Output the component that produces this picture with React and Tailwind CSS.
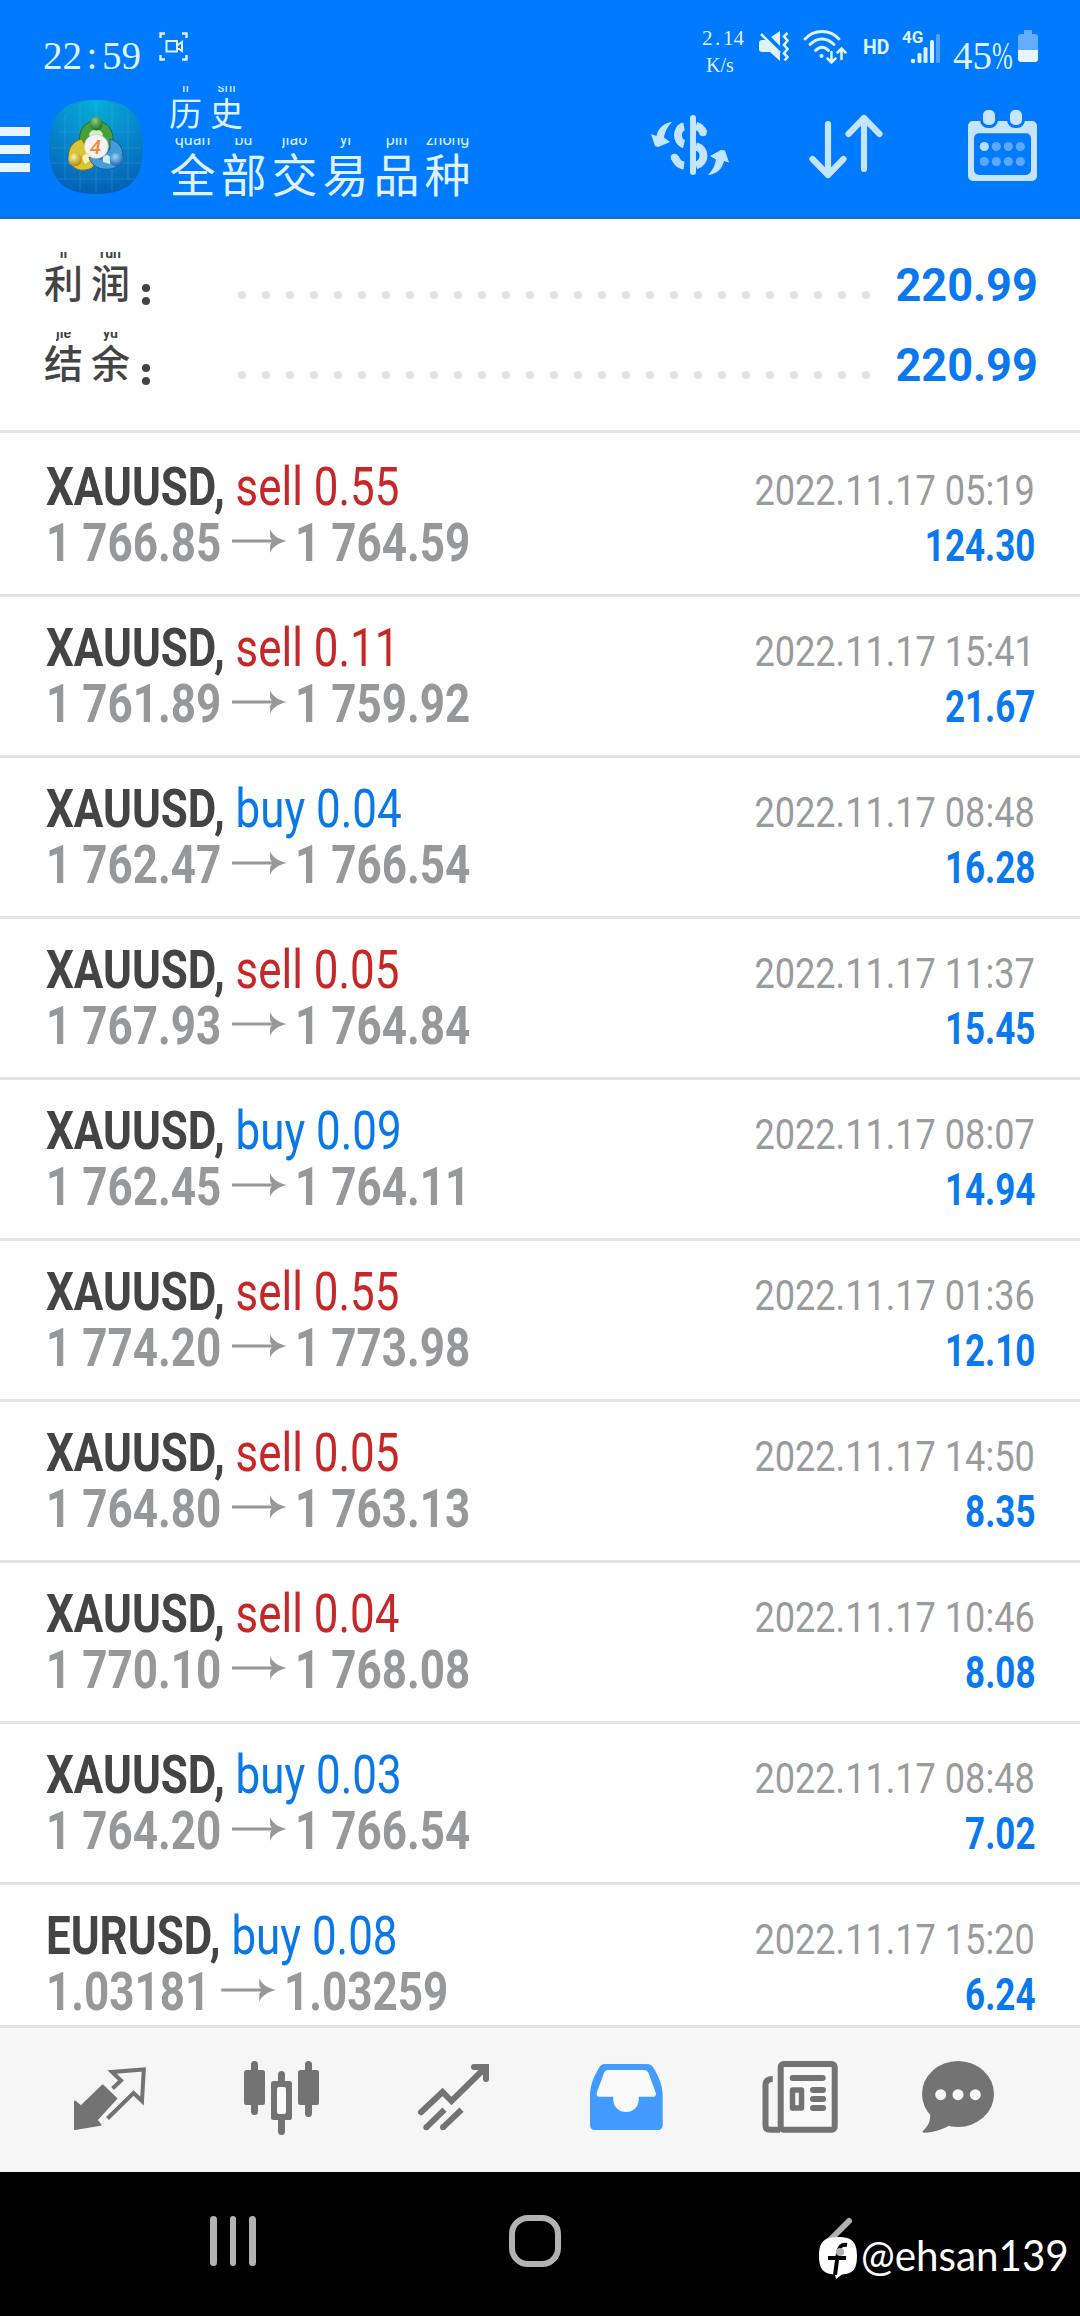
const deals = [
  { symbol: "XAUUSD", side: "sell", lots: "0.55", open: "1 766.85", close: "1 764.59", time: "2022.11.17 05:19", profit: "124.30" },
  { symbol: "XAUUSD", side: "sell", lots: "0.11", open: "1 761.89", close: "1 759.92", time: "2022.11.17 15:41", profit: "21.67" },
  { symbol: "XAUUSD", side: "buy", lots: "0.04", open: "1 762.47", close: "1 766.54", time: "2022.11.17 08:48", profit: "16.28" },
  { symbol: "XAUUSD", side: "sell", lots: "0.05", open: "1 767.93", close: "1 764.84", time: "2022.11.17 11:37", profit: "15.45" },
  { symbol: "XAUUSD", side: "buy", lots: "0.09", open: "1 762.45", close: "1 764.11", time: "2022.11.17 08:07", profit: "14.94" },
  { symbol: "XAUUSD", side: "sell", lots: "0.55", open: "1 774.20", close: "1 773.98", time: "2022.11.17 01:36", profit: "12.10" },
  { symbol: "XAUUSD", side: "sell", lots: "0.05", open: "1 764.80", close: "1 763.13", time: "2022.11.17 14:50", profit: "8.35" },
  { symbol: "XAUUSD", side: "sell", lots: "0.04", open: "1 770.10", close: "1 768.08", time: "2022.11.17 10:46", profit: "8.08" },
  { symbol: "XAUUSD", side: "buy", lots: "0.03", open: "1 764.20", close: "1 766.54", time: "2022.11.17 08:48", profit: "7.02" },
  { symbol: "EURUSD", side: "buy", lots: "0.08", open: "1.03181", close: "1.03259", time: "2022.11.17 15:20", profit: "6.24" },
];

// a row of hanzi, each with its pinyin above
function Hanzi({ chars, cell, text, pinyin }) {
  return (
    <div className="flex">
      {chars.map(([py, ch]) => (
        <div key={ch} className={`flex flex-col items-center ${cell}`}>
          <div className="flex h-3 items-end justify-center overflow-hidden">
            <span className={`leading-[21px] whitespace-nowrap ${pinyin}`}>{py}</span>
          </div>
          <span className={`font-['Noto_Sans_CJK_SC',sans-serif] ${text}`}>{ch}</span>
        </div>
      ))}
    </div>
  );
}

function StatusBar() {
  return (
    <div className="flex h-20 items-start justify-between pl-[43px] pr-[42px] text-[#dff2ff]">
      <div className="flex items-start">
        <div className="mt-[36px] flex font-['Liberation_Serif',serif] text-[39px] leading-[40px]">
          <span>22</span>
          <span className="w-5 text-center">:</span>
          <span>59</span>
        </div>
        <svg className="ml-[18px] mt-8 h-[30px] w-[30px]" viewBox="0 0 30 30" fill="none" stroke="currentColor" strokeWidth="2.4">
          <path d="M1.5 6V1.5H6M23 1.5h4.500V6M1.500 23v4.500H6M23 27.500h4.500V23" />
          <path d="M7.500 9h10.500v10.500h-10.500zM18 13.500l5-3.500v9l-5-3.500" strokeWidth="2" />
        </svg>
      </div>

      <div className="flex items-start">
        <div className="mt-[25px] w-[42px] text-center font-['Liberation_Serif',serif] text-[21px] leading-[27px]">
          <div className="flex">
            <span className="w-2.5">2</span>
            <span className="w-[11px]">.</span>
            <span>14</span>
          </div>
          <div className="-ml-1.5 text-[20px]">K/s</div>
        </div>

        <svg className="ml-[15px] mt-[31px] h-8 w-[30px]" viewBox="0 0 30 32" fill="currentColor">
          <path d="M3 9h5l13 13v8l-10-9H3c-2 0-3-1-3-3v-6c0-2 1-3 3-3zM12 6l9-6v15z" />
          <path d="M2 3l19 19" fill="none" stroke="currentColor" strokeWidth="2.500" />
          <path d="M28.500 2l-3.500 3.500 3.500 4-3.500 4.500 3.500 4-3.500 4.500 3.500 3.500-3 3.500" fill="none" stroke="currentColor" strokeWidth="2.600" />
        </svg>

        <svg className="ml-[13px] mt-[29px] h-9 w-[46px]" viewBox="0 0 46 36" fill="none" stroke="currentColor" strokeWidth="3" strokeLinecap="round">
          <path d="M3 10c9-10 25-10 34 0M8 15.500c7-7.500 17-7.500 24 0M13.500 21.500c4-4.500 9-4.500 13 0" />
          <circle cx="19.500" cy="27" r="2" fill="currentColor" stroke="none" />
          <path d="M29.500 23v10M25.500 29.500l4 4 4-4M39.500 30V20M35.500 23.500l4-4 4 4" strokeWidth="2.500" />
        </svg>

        <span className="ml-[15px] mt-[37px] w-7 text-[20px] font-bold leading-5">
          <span className="inline-block origin-left scale-x-[0.97]">HD</span>
        </span>

        <div className="relative ml-[11px] mt-[29px] w-10">
          <span className="absolute left-0 top-0 text-[17px] font-bold leading-[17px]">4G</span>
          <svg className="h-9 w-10" viewBox="0 0 40 36" fill="currentColor">
            <circle cx="11" cy="32" r="2.300" />
            <rect x="15.500" y="24" width="4" height="10" rx="1.500" />
            <rect x="21.500" y="18" width="4" height="16" rx="1.500" />
            <rect x="28" y="11" width="4" height="23" rx="1.500" />
            <rect x="34" y="5" width="4" height="29" rx="1.500" opacity=".35" />
          </svg>
        </div>

        <div className="ml-[11px] mt-[36px] flex w-[60px] font-['Liberation_Serif',serif] text-[39px] leading-[40px]">
          <span>45</span>
          <span className="inline-block origin-left scale-x-[0.64]">%</span>
        </div>

        <svg className="ml-[5px] mt-[30px] h-8 w-5 shrink-0" viewBox="0 0 20 32">
          <path d="M6 0h8v4h3c2 0 3 1 3 3v13H0V7c0-2 1-3 3-3h3z" fill="#62abff" />
          <path d="M0 20h20v9c0 2-1 3-3 3H3c-2 0-3-1-3-3z" fill="#e8f5ff" />
        </svg>
      </div>
    </div>
  );
}

function AppLogo() {
  return (
    <svg className="h-[94px] w-[94px]" viewBox="0 0 94 94">
      <defs>
        <radialGradient id="bg" cx=".5" cy="0" r="1">
          <stop offset="0" stopColor="#06b0d8" />
          <stop offset=".5" stopColor="#0788cc" />
          <stop offset="1" stopColor="#0560b4" />
        </radialGradient>
        <radialGradient id="green" cx=".4" cy=".3" r=".7">
          <stop offset="0" stopColor="#8fd07c" />
          <stop offset="1" stopColor="#16702a" />
        </radialGradient>
        <radialGradient id="yellow" cx=".4" cy=".3" r=".7">
          <stop offset="0" stopColor="#fff09a" />
          <stop offset="1" stopColor="#a98a10" />
        </radialGradient>
        <radialGradient id="blue" cx=".4" cy=".3" r=".7">
          <stop offset="0" stopColor="#9ad6f8" />
          <stop offset="1" stopColor="#1763a8" />
        </radialGradient>
      </defs>
      <path d="M47 0C80 0 94 14 94 47S80 94 47 94 0 80 0 47 14 0 47 0z" fill="url(#bg)" />
      <path d="M16 14v66M31 4v86M47 2v90M63 4v86M79 14v66M8 32h78M2 48h90M2 63h90M8 79h78" stroke="#5cc4f0" strokeWidth=".7" opacity=".35" />
      <g strokeWidth="1">
        <path d="M31 47c-3-15 4-26 16-26s20 11 16 26l-6 3H37z" fill="#46a03c" stroke="#1d6b2a" />
        <path d="M40 35c1-7 13-7 14 0l-3 3h-8z" fill="#d5edc4" />
        <path d="M33 39c-10 2-15 11-13 20 2 10 12 14 23 9l6-8-10-8z" fill="#d9c433" stroke="#80700f" />
        <path d="M33 58c2-4 5-5 8-3l1 5-6 4z" fill="#fbf3b0" />
        <path d="M61 39c10 3 15 11 12 21-3 9-14 11-23 8-5-2-9-6-10-11l12 2 9-10z" fill="#469cd9" stroke="#1c5b94" />
        <path d="M61 57c-3-3-5-2-7 0v5l7 2z" fill="#d0ecfb" />
      </g>
      <ellipse cx="47.300" cy="23.500" rx="6.300" ry="7" fill="url(#green)" />
      <circle cx="26" cy="59.500" r="6.800" fill="url(#yellow)" />
      <circle cx="67.500" cy="59.500" r="6.800" fill="url(#blue)" />
      <circle cx="47.300" cy="46.500" r="12" fill="#f4f4f4" stroke="#c9c9c9" strokeWidth=".6" />
      <text x="46.500" y="53.500" textAnchor="middle" fontFamily="Roboto, sans-serif" fontSize="20" fontStyle="italic" fontWeight="500" fill="#f08a3c">4</text>
    </svg>
  );
}

function Header() {
  return (
    <header className="h-[219px] shrink-0 border-b-[3px] border-[#1470cf] bg-[#007aff]">
      <StatusBar />
      <div className="flex items-start text-[#dff2ff]">
        <div className="mt-[47px] flex w-[30px] flex-col gap-[9.500px]">
          <span className="h-[8.500px] bg-[#e8f5ff]" />
          <span className="h-[8.500px] bg-[#e8f5ff]" />
          <span className="h-[8.500px] bg-[#e8f5ff]" />
        </div>
        <div className="ml-[19px] mt-5">
          <AppLogo />
        </div>
        <div className="ml-[22px] mt-1.5 flex w-[483px] flex-col gap-3">
          <Hanzi
            chars={[["li", "历"], ["shi", "史"]]}
            cell="w-[41px]"
            text="text-[33px] leading-[28px]"
            pinyin="text-[14px]"
          />
          <div className="ml-0.5">
            <Hanzi
              chars={[["quan", "全"], ["bu", "部"], ["jiao", "交"], ["yi", "易"], ["pin", "品"], ["zhong", "种"]]}
              cell="w-[51px]"
              text="text-[46px] leading-[44px]"
              pinyin="text-[16px]"
            />
          </div>
        </div>

        {/* currency */}
        <svg className="mt-7 h-[72px] w-[84px]" viewBox="0 0 84 72" fill="none" stroke="#c5e4ff">
          <path d="M45 10v54" strokeWidth="6" strokeLinecap="round" />
          <path d="M36 18.500C28 20 28 34 36 36" strokeWidth="8" />
          <path d="M27 49c1 4 4 8 9 8.500" strokeWidth="8" />
          <path d="M26.500 49.500v0M55 24.500v0" strokeWidth="7.500" strokeLinecap="round" />
          <path d="M48 18c4 1 6 3 7.500 7M48 38.500c10 2 10 16 0 19" strokeWidth="8" />
          <path d="M24 14C16 15 10 20 8.500 28L3 26l4 12 3 1 12-5-6-4.500C17 24 19 19 24 14zM60 67c9-1 14-6 16-14l5 1.500-4-12-4-.5-11 6 6 3.500C67 57 65 62 60 67z" fill="#c5e4ff" stroke="none" />
        </svg>

        {/* sort */}
        <svg className="ml-[72px] mt-7 h-[72px] w-[84px]" viewBox="0 0 84 72" fill="none" stroke="#c5e4ff" strokeWidth="6.200" strokeLinecap="round" strokeLinejoin="round">
          <path d="M24 16v51M8.500 51L24 67l15.500-16M60 61V10M44.500 26L60 10l15.500 16" />
        </svg>

        {/* calendar */}
        <svg className="ml-[76px] mt-7 h-[76px] w-[78px]" viewBox="0 0 78 76">
          <rect x="4" y="13" width="69" height="60" rx="5" fill="#c5e4ff" />
          <rect x="10" y="25.300" width="57" height="41.700" rx="5" fill="#007aff" />
          <rect x="17.500" y="0.500" width="15" height="18" rx="6.500" fill="#c5e4ff" stroke="#007aff" strokeWidth="3" />
          <rect x="44.500" y="0.500" width="15" height="18" rx="6.500" fill="#c5e4ff" stroke="#007aff" strokeWidth="3" />
          <circle cx="20.300" cy="38.500" r="4.600" fill="#b8e0ff" />
          <g fill="#5aa9ff">
            <circle cx="32.300" cy="38.500" r="4.600" />
            <circle cx="44.300" cy="38.500" r="4.600" />
            <circle cx="56.300" cy="38.500" r="4.600" />
            <circle cx="20.300" cy="53.500" r="4.600" />
            <circle cx="32.300" cy="53.500" r="4.600" />
            <circle cx="44.300" cy="53.500" r="4.600" />
            <circle cx="56.300" cy="53.500" r="4.600" />
          </g>
        </svg>
      </div>
    </header>
  );
}

function SummaryRow({ chars, value }) {
  return (
    <div className="flex h-[52px] items-end pl-10 pr-[42px]">
      <div className="self-start">
        <Hanzi
          chars={chars}
          cell="w-[47px]"
          text="text-[39px] font-medium leading-[35px]"
          pinyin="text-[14px] font-bold"
        />
      </div>
      <span className="-mb-px ml-2 flex h-[21px] w-2.5 flex-col justify-between">
        <span className="h-2 w-2 rounded-full bg-[#444]" />
        <span className="h-2 w-2 rounded-full bg-[#444]" />
      </span>
      <div className="mb-[5px] ml-[86px] flex w-[632px] justify-between">
        {Array.from({ length: 27 }, (_, i) => (
          <span key={i} className="h-2 w-[7.500px] rounded-full bg-[#e3e3e3]" />
        ))}
      </div>
      <span className="ml-auto origin-right scale-x-[0.97] text-[46.500px] font-bold leading-[38px] text-[#0a78ee]">{value}</span>
    </div>
  );
}

function Summary() {
  return (
    <section className="flex h-[214px] shrink-0 flex-col gap-7 border-b-[3px] border-[#e3e3e3] pt-[33px] text-[#444]">
      <SummaryRow chars={[["li", "利"], ["run", "润"]]} value="220.99" />
      <SummaryRow chars={[["jie", "结"], ["yu", "余"]]} value="220.99" />
    </section>
  );
}

function DealRow({ deal }) {
  return (
    <li className="h-[161px] shrink-0 border-b-[3px] border-[#e3e3e3] pl-[46px] pr-[45px] pt-[23px]">
      <div className="flex items-baseline justify-between leading-[56px]">
        <span className="origin-left scale-x-[0.828] whitespace-nowrap text-[53px]">
          <b className="text-[#444]">{deal.symbol},</b>{" "}
          <span className={deal.side === "sell" ? "text-[#c62828]" : "text-[#0a78e6]"}>
            {deal.side} {deal.lots}
          </span>
        </span>
        <span className="origin-right scale-x-[0.84] whitespace-nowrap text-[43px] text-[#999b9c]">{deal.time}</span>
      </div>
      <div className="-mt-[3px] flex items-baseline justify-between font-bold leading-[56px]">
        <span className="flex origin-left scale-x-[0.83] items-baseline whitespace-nowrap text-[53px] text-[#96989a]">
          {deal.open}
          <svg className="ml-[13px] mr-2.5 h-6 w-[66px] -translate-y-2" viewBox="0 0 66 24">
            <path d="M0 12h52" stroke="currentColor" strokeWidth="3" />
            <path d="M46 0c3 7 11 10 20 12-9 2-17 5-20 12v-8l3-4-3-4z" fill="currentColor" />
          </svg>
          {deal.close}
        </span>
        <span className="origin-right scale-x-[0.805] whitespace-nowrap text-[43.500px] text-[#0a78ee]">{deal.profit}</span>
      </div>
    </li>
  );
}

function TabBar() {
  return (
    <nav className="flex h-[147px] shrink-0 items-center gap-[92px] border-t-[3px] border-[#e3e3e3] bg-[#f6f6f6] pl-[70px] text-[#737373]">
      {/* quotes */}
      <svg className="h-[88px] w-20 shrink-0" viewBox="0 0 80 88">
        <path d="M5 45.500l6 5L32.700 29.500l13.500 13L26.500 64l4 4.800L5 73z" fill="currentColor" stroke="currentColor" strokeWidth="2" strokeLinejoin="round" />
        <path d="M42.500 32.500l8.500-8-9-8.500 31.800-2.500L72 45l-8.500-8L37.500 62.500" fill="none" stroke="currentColor" strokeWidth="4" />
      </svg>
      {/* charts */}
      <svg className="h-[88px] w-20 shrink-0" viewBox="0 0 80 88" fill="currentColor">
        <rect x="9" y="5" width="7" height="54" rx="3.500" />
        <rect x="2" y="14" width="21" height="35" rx="2.500" />
        <rect x="36" y="15" width="7" height="64" rx="3.500" />
        <rect x="29" y="25" width="21" height="39" rx="2.500" />
        <rect x="35" y="31" width="9" height="27" rx="2" fill="#fafafa" />
        <rect x="63" y="5" width="7" height="56" rx="3.500" />
        <rect x="56" y="14" width="21" height="35" rx="2.500" />
      </svg>
      {/* trade */}
      <svg className="h-[88px] w-20 shrink-0" viewBox="0 0 80 88" fill="none" stroke="currentColor" strokeWidth="6">
        <path d="M7 56.300l21.500-20.300 9 9L70 13" strokeLinecap="round" />
        <path d="M60 11h12v12" strokeLinecap="round" />
        <path d="M12.300 71.300L30.500 53.700M29 71.300l18.500-17.600" />
        <path d="M12.300 71.300v0M29 71.300v0" strokeLinecap="round" />
      </svg>
      {/* history */}
      <svg className="h-[88px] w-20 shrink-0" viewBox="0 0 80 88">
        <path d="M19 8h42c3 0 5 1 6.500 4 5 8 9.200 17 9.200 28v29c0 3-2 5-5 5H9c-3 0-5-2-5-5V40c0-11 4-20 9-28 1.500-3 3-4 6-4z" fill="#439aff" />
        <path d="M22 14h36c2 0 3.500 1 4.500 3l7 19c1 3 0 4.700-2 4.700H52.700V44a12.700 12 0 0 1-25.400 0v-3.300H13c-2 0-3-1.700-2-4.700l7-19c1-2 2-3 4-3z" fill="#f9f9f9" />
      </svg>
      {/* news */}
      <svg className="ml-0.5 h-[88px] w-20 shrink-0" viewBox="0 0 80 88" fill="none" stroke="currentColor" strokeWidth="6">
        <path d="M20 73.700H10c-3 0-4.500-1.500-4.500-4.500V29c0-4 2.500-6 7.200-6" />
        <rect x="20.700" y="8" width="54" height="65.700" rx="3" fill="#f9f9f9" />
        <rect x="32.500" y="34" width="9" height="18" strokeWidth="5.500" strokeLinejoin="round" />
        <path d="M32.700 22h30M53 34h10M53 43h10M53 52h10" strokeLinecap="round" />
      </svg>
      {/* messages */}
      <svg className="-ml-3.5 h-[88px] w-20 shrink-0" viewBox="0 0 80 88" fill="currentColor">
        <ellipse cx="40" cy="38" rx="36" ry="33" />
        <path d="M12 57c1 8-2 13-7 18-1 1 0 1.700 1 1.700 11-.7 17-3 25-7z" />
        <g fill="#f9f9f9">
          <circle cx="22.700" cy="38.700" r="5.500" />
          <circle cx="40" cy="38.700" r="5.500" />
          <circle cx="57.300" cy="38.700" r="5.500" />
        </g>
      </svg>
    </nav>
  );
}

function SystemBar() {
  return (
    <div className="relative flex h-36 shrink-0 items-center bg-black text-[#b2b2b2]">
      <div className="ml-[210px] flex gap-[13px] -translate-y-[3px]">
        <span className="h-[50px] w-[6.500px] rounded-full bg-[#b2b2b2]" />
        <span className="h-[50px] w-[6.500px] rounded-full bg-[#b2b2b2]" />
        <span className="h-[50px] w-[6.500px] rounded-full bg-[#b2b2b2]" />
      </div>
      <span className="ml-[253px] h-[52px] w-[52px] -translate-y-[3px] rounded-[19px] border-[6.500px] border-[#b2b2b2]" />
      <svg className="ml-[261px] h-[52px] w-8 -translate-y-[3px]" viewBox="0 0 32 52" fill="none" stroke="currentColor" strokeWidth="6" strokeLinecap="round" strokeLinejoin="round">
        <path d="M27 6L7 26l12 12" />
      </svg>
      <div className="absolute left-[819px] top-[60px] flex items-start text-white">
        <svg className="mt-[5px] h-[42px] w-[38px]" viewBox="0 0 38 42">
          <path d="M19 0c14 0 19 5 19 19 0 13-4 18-15 18.500L17 42l-1-4.500C4 37 0 32 0 19 0 5 5 0 19 0z" fill="#fff" />
          <path d="M28 8c-6-1-8 2-9 8l-3 22M9 21h18" fill="none" stroke="#000" strokeWidth="4" />
          <circle cx="21" cy="15" r="4" fill="#b2b2b2" />
        </svg>
        <span className="ml-1 origin-left scale-x-[0.96] whitespace-nowrap font-['Lato',sans-serif] text-[42px] leading-[46px]">@ehsan139</span>
      </div>
    </div>
  );
}

export default function App() {
  return (
    <div className="flex h-[2316px] w-[1080px] flex-col overflow-hidden bg-white font-['Roboto',sans-serif]">
      <Header />
      <Summary />
      <ul className="flex min-h-0 flex-1 flex-col overflow-hidden pt-[3px]">
        {deals.map((deal) => (
          <DealRow key={deal.open + deal.time} deal={deal} />
        ))}
      </ul>
      <TabBar />
      <SystemBar />
    </div>
  );
}
